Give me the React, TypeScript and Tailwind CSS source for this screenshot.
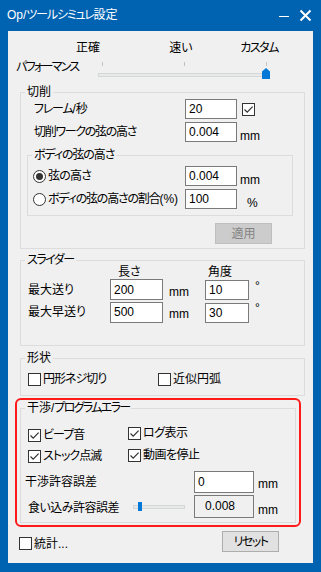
import React from "react";

const font = "font-['Liberation_Sans','Noto_Sans_CJK_JP',sans-serif] [font-feature-settings:'palt']";

const CheckBox = ({ checked = false }: { checked?: boolean }) => (
  <span className="w-[13px] h-[13px] border border-[#333333] bg-white flex items-center justify-center shrink-0">
    {checked && (
      <svg width="11" height="11" viewBox="0 0 11 11">
        <path d="M1.5 5.5 L4.2 8.2 L9.6 2.6" stroke="#333333" strokeWidth="1.2" fill="none" />
      </svg>
    )}
  </span>
);

const Radio = ({ selected = false }: { selected?: boolean }) => (
  <span className="w-[13px] h-[13px] rounded-full border border-[#333333] bg-white flex items-center justify-center shrink-0">
    {selected && <span className="w-[7px] h-[7px] rounded-full bg-[#333333]" />}
  </span>
);

const Box = ({ value, w, h = 20 }: { value: string; w: string; h?: number }) => (
  <div
    className={`${w} ${h === 22 ? "h-[22px]" : h === 21 ? "h-[21px]" : "h-[20px]"} border border-[#7A7A7A] bg-white flex items-center pl-[3px] shrink-0`}
  >
    {value}
  </div>
);

const Legend = ({ children, tight = "" }: { children: React.ReactNode; tight?: string }) => (
  <legend className={`ml-[4px] px-[2px] leading-[16px] ${tight}`}>{children}</legend>
);

const App = () => {
  return (
    <div className={`w-[321px] h-[572px] bg-[#0063B1] flex flex-col text-[12px] leading-[16px] text-black ${font}`}>
      {/* title bar */}
      <div className="h-[31px] flex items-center pl-[7px] pr-[9px] text-white">
        <span className="-mt-[2px] whitespace-nowrap">
          Op/<span className="tracking-[-1.2px]">ツールシミュレ</span>設定
        </span>
        <svg className="ml-auto" width="12" height="12" viewBox="0 0 12 12">
          <path d="M1 6.5 H11" stroke="white" strokeWidth="1" />
        </svg>
        <svg className="ml-[9px]" width="13" height="13" viewBox="0 0 13 13">
          <path d="M1.5 1.5 L11.5 11.5 M11.5 1.5 L1.5 11.5" stroke="white" strokeWidth="2" />
        </svg>
      </div>

      {/* client area */}
      <div className="ml-[8px] w-[305px] h-[532px] bg-[#F0F0F0] flex flex-col pt-[9px]">
        <div className="flex pl-[56px] h-[16px]">
          <span className="w-[48px] text-center">正確</span>
          <span className="w-[48px] text-center ml-[45px]">速い</span>
          <span className="w-[48px] text-center ml-[30px] tracking-[-1.5px]">カスタム</span>
        </div>
        <div className="flex mt-[3px]">
          <span className="w-[90px] pl-[8px] tracking-[-1.7px]">パフォーマンス</span>
          <div className="relative w-[172px] h-[22px] mt-[2px]">
            <span className="absolute left-[4px] top-[1px] w-[1px] h-[4px] bg-[#C4C4C4]" />
            <span className="absolute left-[86px] top-[1px] w-[1px] h-[4px] bg-[#C4C4C4]" />
            <span className="absolute left-[168px] top-[1px] w-[1px] h-[4px] bg-[#C4C4C4]" />
            <div className="absolute left-0 top-[12px] w-[170px] h-[4px] border border-[#D6D6D6] bg-[#E7EAEA]" />
            <svg className="absolute left-[164px] top-[7px]" width="8" height="11" viewBox="0 0 8 11">
              <path d="M0 3.5 L4 0 L8 3.5 V11 H0 Z" fill="#0078D7" />
            </svg>
          </div>
        </div>

        {/* 切削 */}
        <fieldset className="ml-[12px] w-[285px] mt-[1px] border border-[#DCDCDC] pb-[4px]">
          <Legend>切削</Legend>
          <div className="flex items-center h-[20px] -mt-[1px]">
            <span className="w-[164px] pl-[13px]">
              <span className="tracking-[-1.2px]">フレーム</span>/秒
            </span>
            <Box value="20" w="w-[52px]" />
            <span className="ml-[5px]">
              <CheckBox checked />
            </span>
          </div>
          <div className="flex items-center h-[20px] mt-[3px]">
            <span className="w-[164px] pl-[13px] tracking-[-1.3px]">切削ワークの弦の高さ</span>
            <Box value="0.004" w="w-[52px]" />
            <span className="ml-[3px] mt-[7px]">mm</span>
          </div>

          <fieldset className="ml-[6px] w-[266px] mt-[5px] border border-[#DCDCDC] pb-[6px]">
            <Legend tight="tracking-[-1.1px]">ボディの弦の高さ</Legend>
            <div className="flex items-center h-[20px] mt-[3px]">
              <div className="w-[157px] pl-[5px] flex items-center gap-[2px]">
                <Radio selected />
                <span className="tracking-[-0.8px]">弦の高さ</span>
              </div>
              <Box value="0.004" w="w-[52px]" />
              <span className="ml-[3px] mt-[7px]">mm</span>
            </div>
            <div className="flex items-center h-[20px] mt-[3px]">
              <div className="w-[157px] pl-[5px] flex items-center gap-[2px]">
                <Radio />
                <span className="whitespace-nowrap">
                  <span className="tracking-[-1.2px]">ボディの弦の高さの割合</span>(%)
                </span>
              </div>
              <Box value="100" w="w-[52px]" />
              <span className="ml-[10px] mt-[7px]">%</span>
            </div>
          </fieldset>

          <button className="ml-[194px] mt-[7px] w-[57px] h-[21px] bg-[#CCCCCC] border border-[#BFBFBF] text-[#838383] flex items-center justify-center">
            適用
          </button>
        </fieldset>

        {/* スライダー */}
        <fieldset className="ml-[12px] w-[285px] mt-[3px] border border-[#DCDCDC] pb-[22px]">
          <Legend tight="tracking-[-1.5px]">スライダー</Legend>
          <div className="flex h-[15px] -mt-[4px] pl-[97px]">
            <span className="w-[90px]">長さ</span>
            <span>角度</span>
          </div>
          <div className="flex items-center">
            <span className="w-[89px] pl-[7px]">最大送り</span>
            <Box value="200" w="w-[53px]" h={21} />
            <span className="w-[42px] pl-[6px] mt-[4px]">mm</span>
            <Box value="10" w="w-[44px]" />
            <span className="ml-[6px] self-start -mt-[1px]">°</span>
          </div>
          <div className="flex items-center mt-[1px]">
            <span className="w-[89px] pl-[7px]">最大早送り</span>
            <Box value="500" w="w-[53px]" h={21} />
            <span className="w-[42px] pl-[6px] mt-[4px]">mm</span>
            <div className="mt-[2px]">
              <Box value="30" w="w-[44px]" />
            </div>
            <span className="ml-[6px] self-start -mt-[1px]">°</span>
          </div>
        </fieldset>

        {/* 形状 */}
        <fieldset className="ml-[12px] w-[285px] mt-[4px] border border-[#DCDCDC] pb-[8px]">
          <Legend>形状</Legend>
          <div className="flex items-center h-[16px] mt-[5px]">
            <div className="w-[137px] pl-[7px] flex items-center gap-[2px]">
              <CheckBox />
              <span className="tracking-[-1px]">円形ネジ切り</span>
            </div>
            <div className="flex items-center gap-[2px]">
              <CheckBox />
              <span>近似円弧</span>
            </div>
          </div>
        </fieldset>

        {/* 干渉/プログラムエラー (highlighted) */}
        <div className="ml-[7px] w-[286px] mt-[2px] border-2 border-[#FF1A1A] rounded-[6px] px-[3px] pb-[2px]">
          <fieldset className="w-[276px] border border-[#DCDCDC] pb-[4px]">
            <Legend>
              干渉/<span className="tracking-[-1.7px]">プログラムエラー</span>
            </Legend>
            <div className="flex items-start mt-[9px]">
              <div className="w-[107px] pl-[7px] flex items-center gap-[2px] mt-[2px]">
                <CheckBox checked />
                <span className="tracking-[-1px]">ビープ音</span>
              </div>
              <div className="flex items-center gap-[2px]">
                <CheckBox checked />
                <span className="tracking-[-0.5px]">ログ表示</span>
              </div>
            </div>
            <div className="flex items-start mt-[4px]">
              <div className="w-[107px] pl-[7px] flex items-center gap-[2px] mt-[1px]">
                <CheckBox checked />
                <span className="tracking-[-1px]">ストック点滅</span>
              </div>
              <div className="flex items-center gap-[2px]">
                <CheckBox checked />
                <span className="tracking-[-0.5px]">動画を停止</span>
              </div>
            </div>
            <div className="flex items-center mt-[7px]">
              <span className="w-[173px] pl-[4px]">干渉許容誤差</span>
              <Box value="0" w="w-[60px]" h={22} />
              <span className="ml-[4px] mt-[3px]">mm</span>
            </div>
            <div className="flex items-center mt-[2px]">
              <span className="w-[112px] pl-[7px] mt-[2px] tracking-[-0.5px]">食い込み許容誤差</span>
              <div className="relative w-[52px] h-[10px] mt-[1px]">
                <div className="absolute left-0 top-[3px] w-[52px] h-[4px] border border-[#D6D6D6] bg-[#E7EAEA]" />
                <span className="absolute left-[5px] top-0 w-[4px] h-[9px] bg-[#0078D7]" />
              </div>
              <div className="ml-[9px] w-[60px] h-[23px] border border-[#7A7A7A] bg-[#F0F0F0] pl-[10px] pt-[2px] shrink-0">
                0.008
              </div>
              <span className="ml-[4px] mt-[6px]">mm</span>
            </div>
          </fieldset>
        </div>

        <div className="flex items-center mt-[4px] h-[21px]">
          <div className="pl-[11px] flex items-center gap-[2px] mt-[4px]">
            <CheckBox />
            <span>統計...</span>
          </div>
          <button className="ml-auto mr-[34px] w-[57px] h-[21px] bg-[#E1E1E1] border border-[#ADADAD] flex items-center justify-center tracking-[-1.5px]">
            リセット
          </button>
        </div>
      </div>
    </div>
  );
};

export default App;
